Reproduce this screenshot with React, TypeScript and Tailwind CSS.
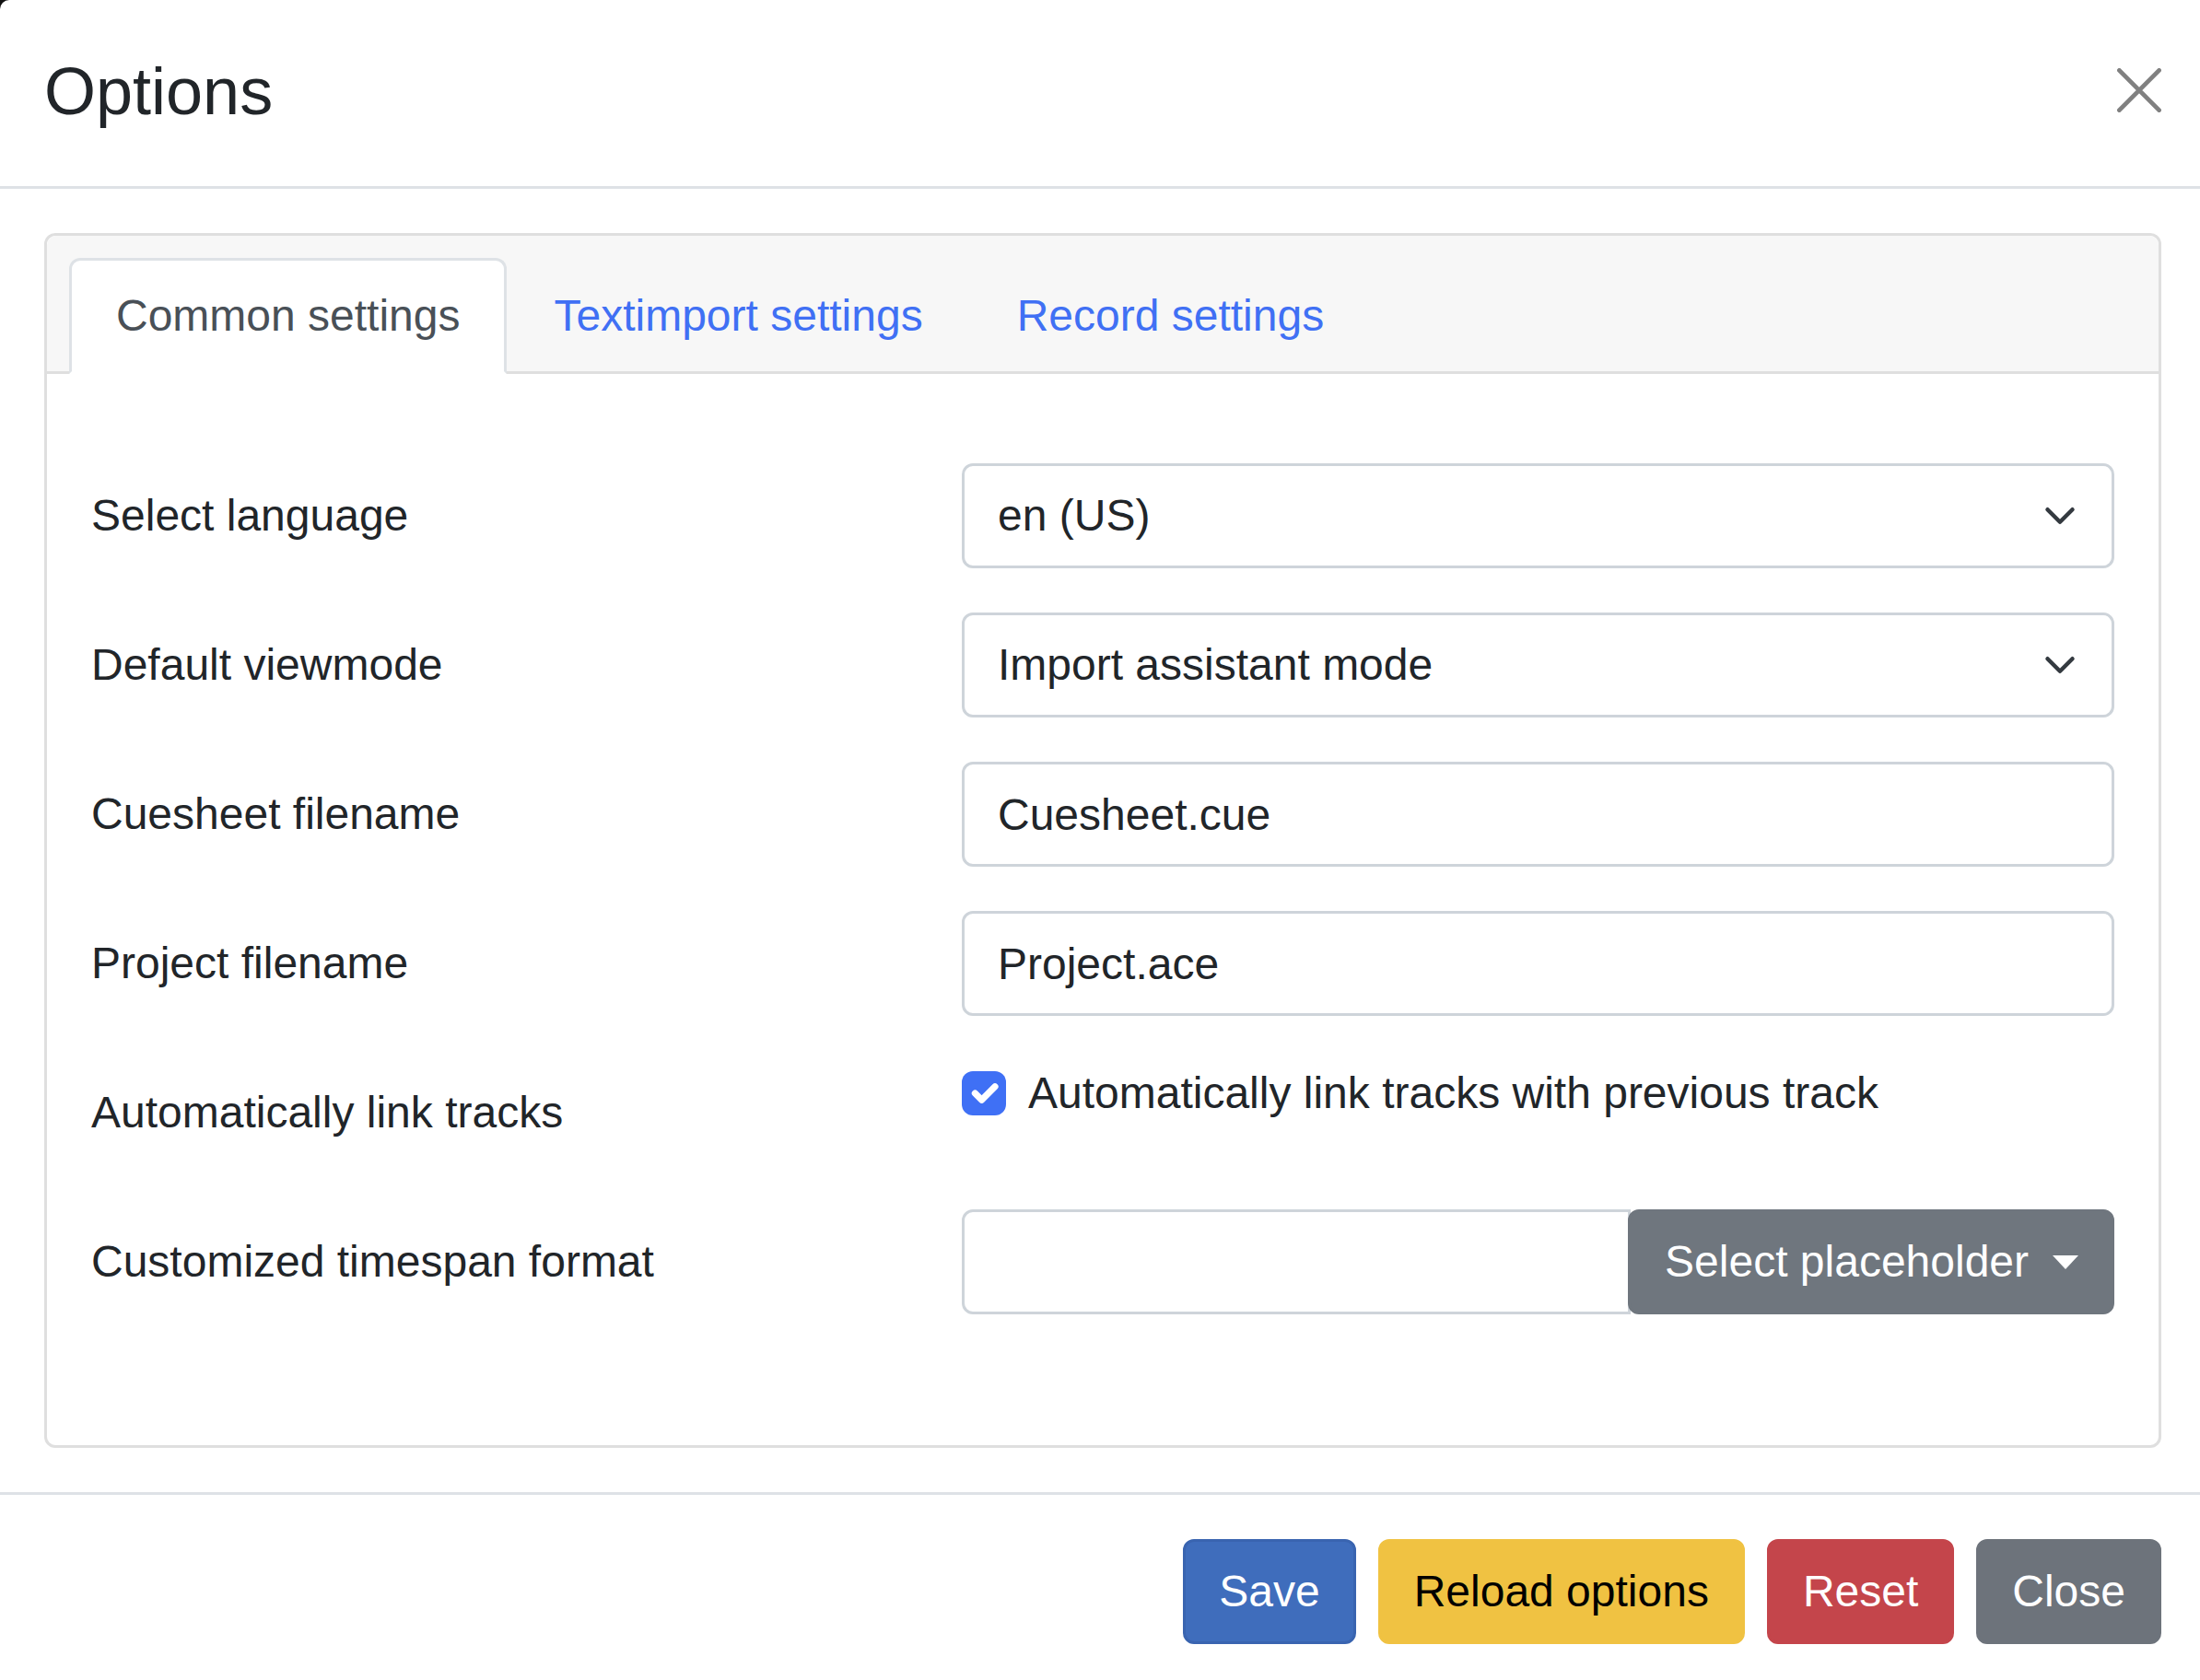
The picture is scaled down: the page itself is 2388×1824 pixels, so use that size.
import { useState } from 'react';

type Row =
  | { label: string; kind: 'select'; value: string }
  | { label: string; kind: 'input'; value: string }
  | { label: string; kind: 'check'; text: string }
  | { label: string; kind: 'group'; button: string };

const rows: Row[] = [
  { label: 'Select language', kind: 'select', value: 'en (US)' },
  { label: 'Default viewmode', kind: 'select', value: 'Import assistant mode' },
  { label: 'Cuesheet filename', kind: 'input', value: 'Cuesheet.cue' },
  { label: 'Project filename', kind: 'input', value: 'Project.ace' },
  { label: 'Automatically link tracks', kind: 'check', text: 'Automatically link tracks with previous track' },
  { label: 'Customized timespan format', kind: 'group', button: 'Select placeholder' },
];

const tabs = ['Common settings', 'Textimport settings', 'Record settings'];

function Chevron() {
  return (
    <svg width="36" height="36" viewBox="0 0 16 16" fill="none" className="shrink-0">
      <path d="m2 5 6 6 6-6" stroke="#343a40" strokeWidth="2" strokeLinecap="round" strokeLinejoin="round" />
    </svg>
  );
}

function Control({ row }: { row: Row }) {
  if (row.kind === 'select') {
    return (
      <div className="flex h-[114px] items-center justify-between rounded-[12px] border-[3px] border-[#ced4da] bg-white pl-[36px] pr-[38px] text-[48px] leading-[72px] text-[#212529]">
        <span>{row.value}</span>
        <Chevron />
      </div>
    );
  }
  if (row.kind === 'input') {
    return (
      <input
        readOnly
        value={row.value}
        className="block h-[114px] w-full rounded-[12px] border-[3px] border-[#ced4da] bg-white px-[36px] text-[48px] leading-[72px] text-[#212529] outline-none"
      />
    );
  }
  if (row.kind === 'check') {
    return (
      <label className="flex items-start gap-[24px] text-[48px] leading-[72px] text-[#212529]">
        <span className="mt-[12px] flex h-[48px] w-[48px] shrink-0 items-center justify-center rounded-[12px] bg-[#3f70f5]">
          <svg width="48" height="48" viewBox="0 0 20 20" fill="none">
            <path d="m6 10 3 3 6-6" stroke="#fff" strokeWidth="3" strokeLinecap="round" strokeLinejoin="round" />
          </svg>
        </span>
        <span>{row.text}</span>
      </label>
    );
  }
  return (
    <div className="flex h-[114px]">
      <input
        readOnly
        value=""
        className="block h-full min-w-0 flex-1 rounded-l-[12px] border-[3px] border-[#ced4da] bg-white px-[36px] text-[48px] outline-none"
      />
      <button className="-ml-[3px] flex h-full items-center rounded-[12px] border-[3px] border-[#6f767e] bg-[#6f767e] pl-[37px] pr-[36px] text-[48px] leading-[72px] text-white">
        {row.button}
        <span className="ml-[26px] h-0 w-0 border-x-[14px] border-t-[15px] border-x-transparent border-t-white" />
      </button>
    </div>
  );
}

export default function App() {
  const [active] = useState(0);

  return (
    <div className="h-[1824px] w-[2388px] overflow-hidden bg-[#111] font-['Liberation_Sans',Arial,sans-serif]">
      <div className="min-h-[1840px] w-[2394px] rounded-tl-[10px] bg-white">
        {/* Header */}
        <div className="flex items-center justify-between border-b-[3px] border-[#dee2e6] px-[48px] pb-[49px] pt-[45px]">
          <h4 className="text-[72px] leading-[108px] text-[#212529]">Options</h4>
          <svg width="48" height="48" viewBox="0 0 16 16" fill="none" className="-mt-[2px]">
            <path d="M0.8 0.8 15.2 15.2M15.2 0.8 0.8 15.2" stroke="#808080" strokeWidth="1.6" strokeLinecap="round" />
          </svg>
        </div>

        {/* Body */}
        <div className="p-[48px]">
          <div className="rounded-[12px] border-[3px] border-[#dfdfdf]">
            <div className="rounded-t-[10px] border-b-[3px] border-[#dfdfdf] bg-[#f7f7f7] px-[48px] pt-[24px]">
              <div className="-mx-[24px] -mb-[3px] flex">
                {tabs.map((t, i) => (
                  <div
                    key={t}
                    className={
                      i === active
                        ? 'rounded-t-[12px] border-[3px] border-[#dee2e6] border-b-white bg-white px-[48px] py-[24px] text-[48px] leading-[72px] text-[#495057]'
                        : 'rounded-t-[12px] border-[3px] border-transparent px-[48px] py-[24px] text-[48px] leading-[72px] text-[#4070f4]'
                    }
                  >
                    {t}
                  </div>
                ))}
              </div>
            </div>

            <div className="flex flex-col gap-[48px] px-[48px] pb-[142px] pt-[97px]">
              {rows.map((row) => (
                <div key={row.label} className="grid grid-cols-[873px_1fr] gap-x-[72px]">
                  <div className="py-[21px] text-[48px] leading-[72px] text-[#212529]">{row.label}</div>
                  <Control row={row} />
                </div>
              ))}
            </div>
          </div>
        </div>

        {/* Footer */}
        <div className="flex justify-end border-t-[3px] border-[#dee2e6] px-[36px] py-[36px]">
          <button className="m-[12px] rounded-[12px] border-[3px] border-[#3964b0] bg-[#3f6dbc] px-[36px] py-[18px] text-[48px] leading-[72px] text-white">
            Save
          </button>
          <button className="m-[12px] rounded-[12px] border-[3px] border-[#f0c242] bg-[#f0c242] px-[36px] py-[18px] text-[48px] leading-[72px] text-black">
            Reload options
          </button>
          <button className="m-[12px] rounded-[12px] border-[3px] border-[#c4454b] bg-[#c4454b] px-[36px] py-[18px] text-[48px] leading-[72px] text-white">
            Reset
          </button>
          <button className="m-[12px] rounded-[12px] border-[3px] border-[#6d737b] bg-[#6d737b] px-[36px] py-[18px] text-[48px] leading-[72px] text-white">
            Close
          </button>
        </div>
      </div>
    </div>
  );
}
